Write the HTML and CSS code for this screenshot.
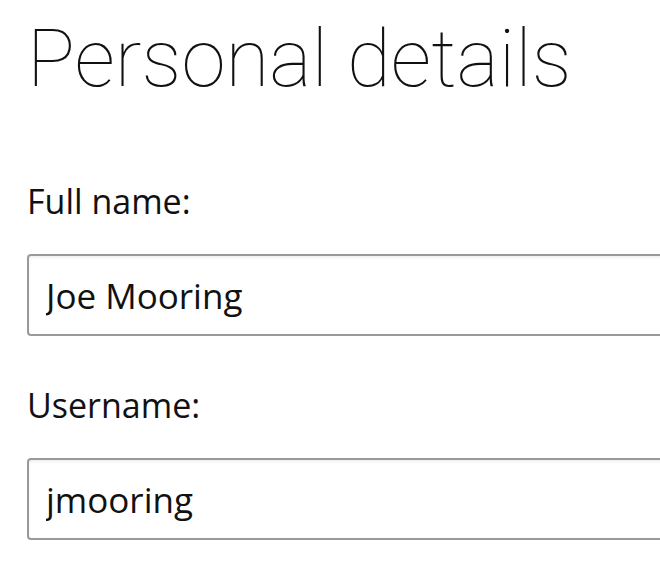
FILE: index.html
```html
<!DOCTYPE html>
<html lang="en">
<head>
<meta charset="utf-8">
<title>Personal details</title>
<link rel="stylesheet" href="styles.css">
</head>
<body>
<main class="page">
  <h1 class="title">Personal details</h1>
  <form class="form">
    <label class="field">
      <span class="field-label">Full name:</span>
      <input class="field-input" type="text" value="Joe Mooring">
    </label>
    <label class="field">
      <span class="field-label">Username:</span>
      <input class="field-input" type="text" value="jmooring">
    </label>
  </form>
</main>
</body>
</html>
```

FILE: styles.css
```css
html, body {
  margin: 0;
  padding: 0;
  background: #fff;
}
body {
  font-family: "Open Sans", "Noto Sans", sans-serif;
  color: #111;
  overflow: hidden;
}
.page {
  padding: 11px 0 0 27px;
}
.title {
  margin: 0;
  font-family: Roboto, "Open Sans", sans-serif;
  font-size: 80px;
  font-weight: 100;
  line-height: 96px;
  color: #111;
}
.form {
  display: flex;
  flex-direction: column;
  gap: 49px;
  margin-top: 74px;
}
.field {
  display: flex;
  flex-direction: column;
  gap: 33px;
}
.field-label {
  font-size: 34px;
  line-height: 40px;
}
.field-input {
  box-sizing: border-box;
  width: 720px;
  height: 82px;
  margin: 0;
  padding: 0 17px;
  border: 2px solid #999;
  border-radius: 4px;
  background: #fff;
  box-shadow: inset 0 2px 3px rgba(0,0,0,0.06);
  font-family: inherit;
  font-size: 35px;
  color: #111;
  outline: none;
}
```
